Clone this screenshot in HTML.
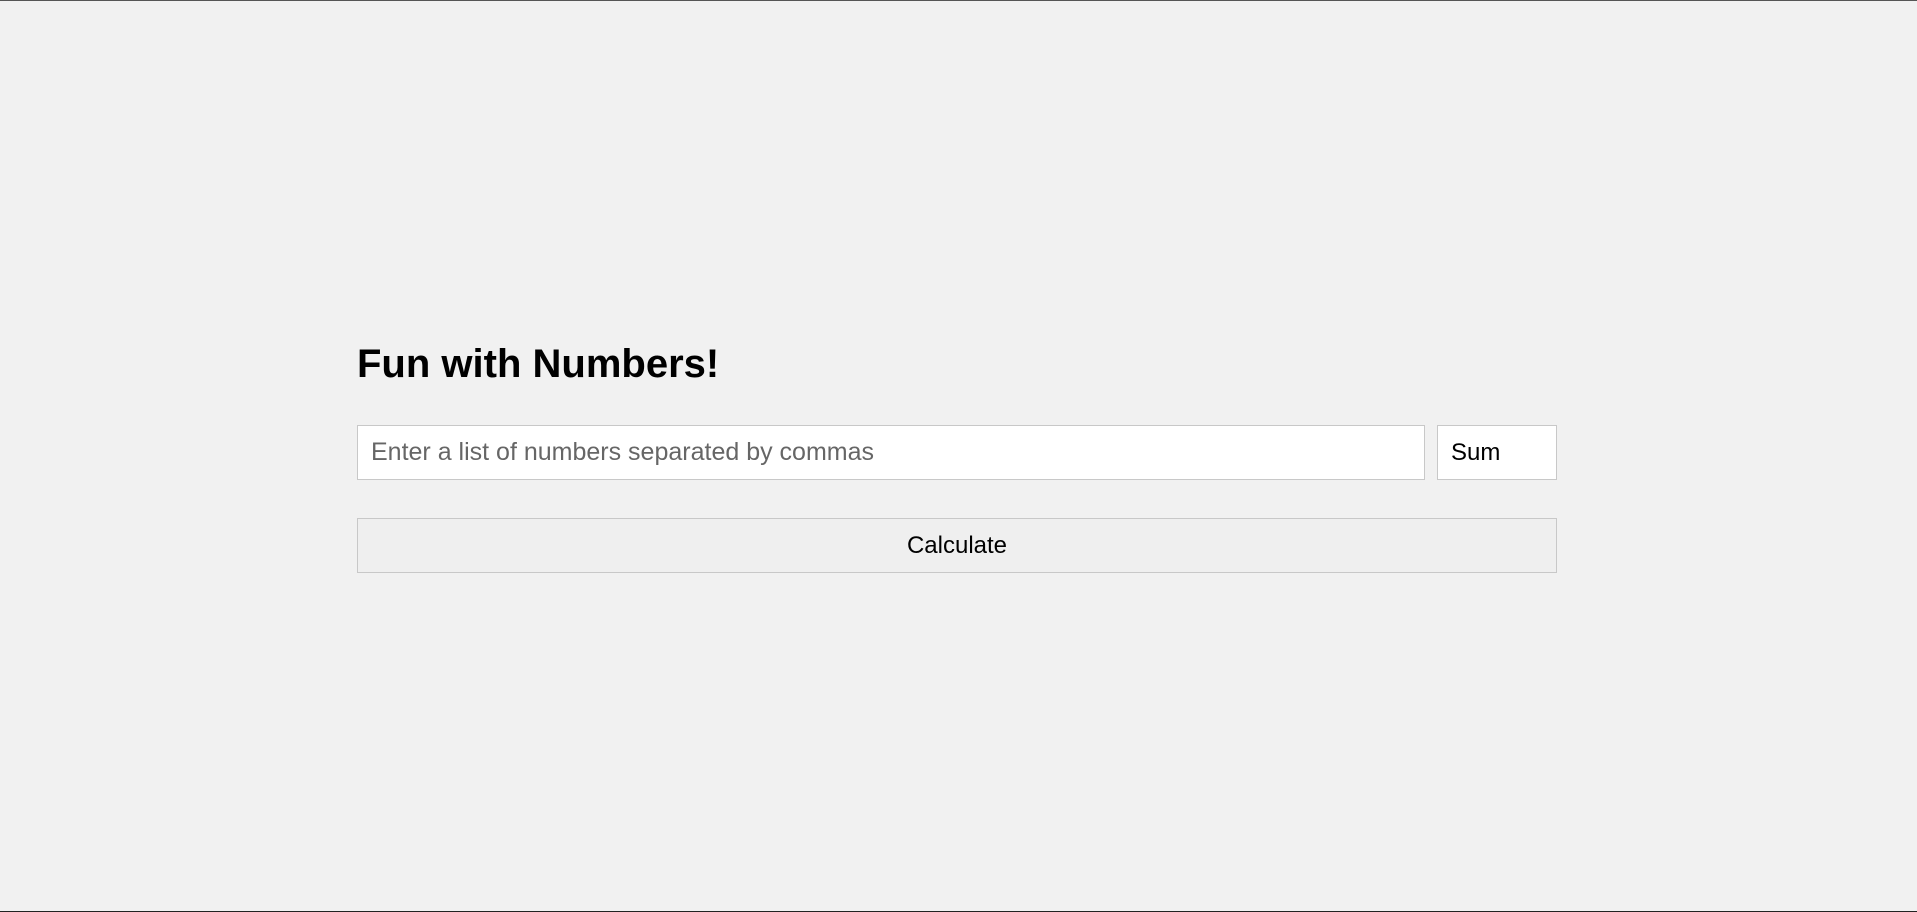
<!DOCTYPE html>
<html><head><style>
html,body{margin:0;padding:0}
body{width:1917px;height:912px;background:#f1f1f1;position:relative;overflow:hidden;font-family:"Liberation Sans",Arial,sans-serif;box-sizing:border-box;border-top:1px solid #555;border-bottom:1px solid #222}
h1{position:absolute;left:357px;top:338px;margin:0;font-size:40px;font-weight:bold;color:#000;line-height:50px}
.inp{position:absolute;left:357px;top:424px;width:1068px;height:55px;background:#fff;border:1px solid #c8c8c8;box-sizing:border-box;font-size:25px;color:#666;line-height:53px;padding-left:13px}
.sel{position:absolute;left:1437px;top:424px;width:120px;height:55px;background:#fff;border:1px solid #c8c8c8;box-sizing:border-box;font-size:24px;color:#000;line-height:54px;padding-left:13px}
.btn{position:absolute;left:357px;top:517px;width:1200px;height:55px;background:#efefef;border:1px solid #c8c8c8;box-sizing:border-box;font-size:24px;color:#000;line-height:53px;text-align:center}
</style></head><body>
<h1>Fun with Numbers!</h1>
<div class="inp">Enter a list of numbers separated by commas</div>
<div class="sel">Sum</div>
<div class="btn">Calculate</div>
</body></html>
